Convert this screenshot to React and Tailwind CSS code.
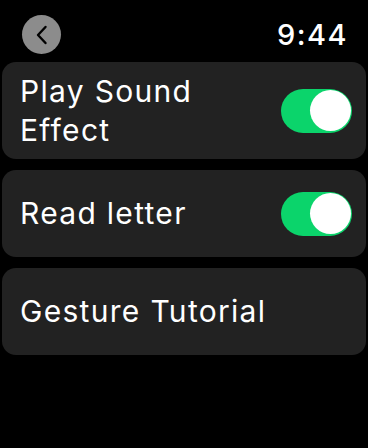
import React from "react";

function Toggle() {
  return (
    <div className="w-[71px] h-[44px] rounded-full bg-[#0bd46b] flex items-center justify-end pr-[1px]">
      <div className="w-[41px] h-[41px] rounded-full bg-white" />
    </div>
  );
}

export default function App() {
  return (
    <div
      className="w-[368px] h-[448px] bg-black text-white overflow-hidden"
      style={{ fontFamily: "Inter, 'Noto Sans', sans-serif" }}
    >
      <div className="flex items-center justify-between pl-[22px] pr-[20px] pt-[15px] h-[62px] pb-[8px]">
        <div className="w-[39px] h-[39px] rounded-full bg-[#8c8c8c] flex items-center justify-center">
          <svg width="16" height="20" viewBox="0 0 16 20" fill="none">
            <path d="M11.5 2 L4 10 L11.5 18" stroke="#000" strokeWidth="2.4" strokeLinecap="round" strokeLinejoin="round" />
          </svg>
        </div>
        <div className="text-[29px] font-medium leading-none tracking-[1.5px]">9:44</div>
      </div>
      <div className="flex flex-col gap-[11px] px-[2px]">
        <div className="h-[97px] rounded-[14px] bg-[#222222] flex items-center justify-between pl-[18px] pr-[14px]">
          <div className="text-[30px] leading-[39px] tracking-[1.3px]">Play Sound<br />Effect</div>
          <Toggle />
        </div>
        <div className="h-[87px] rounded-[14px] bg-[#222222] flex items-center justify-between pl-[18px] pr-[14px]">
          <div className="text-[30px] leading-[39px] tracking-[1.3px]">Read letter</div>
          <Toggle />
        </div>
        <div className="h-[87px] rounded-[14px] bg-[#222222] flex items-center pl-[18px] pr-[14px]">
          <div className="text-[30px] leading-[39px] tracking-[1.3px]">Gesture Tutorial</div>
        </div>
      </div>
    </div>
  );
}
